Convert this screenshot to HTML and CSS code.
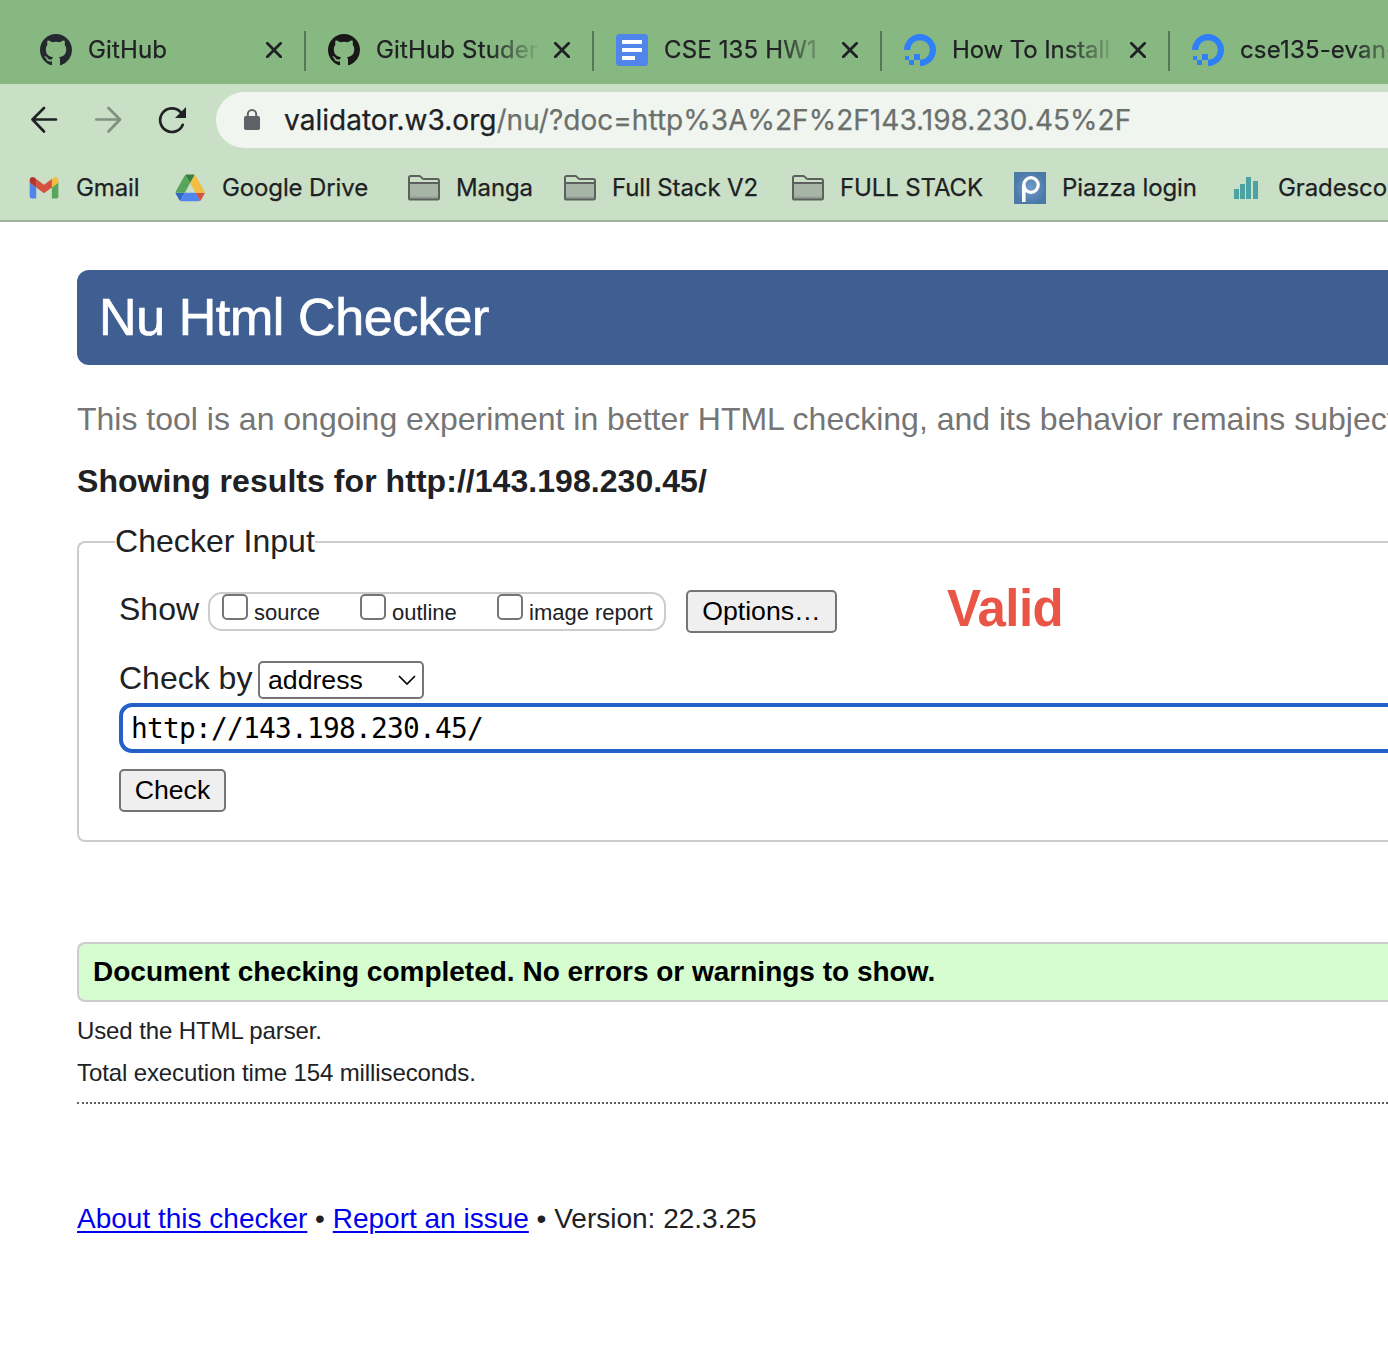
FILE: index.html
```html
<!DOCTYPE html>
<html lang="en">
<head>
<meta charset="utf-8">
<title>Nu Html Checker</title>
<link rel="stylesheet" href="styles.css">
</head>
<body>
<svg class="defs" width="0" height="0" aria-hidden="true">
  <symbol id="github" viewBox="0 0 16 16"><path d="M8 0C3.58 0 0 3.58 0 8c0 3.54 2.29 6.53 5.47 7.59.4.07.55-.17.55-.38 0-.19-.01-.82-.01-1.49-2.01.37-2.53-.49-2.69-.94-.09-.23-.48-.94-.82-1.13-.28-.15-.68-.52-.01-.53.63-.01 1.08.58 1.23.82.72 1.21 1.87.87 2.33.66.07-.52.28-.87.51-1.07-1.78-.2-3.64-.89-3.64-3.95 0-.87.31-1.59.82-2.15-.08-.2-.36-1.02.08-2.12 0 0 .67-.21 2.2.82.64-.18 1.32-.27 2-.27s1.36.09 2 .27c1.53-1.04 2.2-.82 2.2-.82.44 1.1.16 1.92.08 2.12.51.56.82 1.27.82 2.15 0 3.07-1.87 3.75-3.65 3.95.29.25.54.73.54 1.48 0 1.07-.01 1.93-.01 2.2 0 .21.15.46.55.38A8.01 8.01 0 0 0 16 8c0-4.42-3.58-8-8-8z"/></symbol>
  <symbol id="ocean" viewBox="0 0 32 32"><path fill="#2f80f7" d="M16 32v-6.2A9.8 9.8 0 1 0 6.2 16H0a16 16 0 1 1 16 16zM10 20h6v6h-6zM5 26h5v5H5zM1 22h4v4H1z"/></symbol>
  <symbol id="close" viewBox="0 0 16 16"><path d="M1.3 1.3l13.4 13.4M14.7 1.3L1.3 14.7" fill="none" stroke="#202124" stroke-width="2.8" stroke-linecap="round"/></symbol>
  <symbol id="folder" viewBox="0 0 32 26"><path d="M1 8h30v16H1z" fill="#a6b5a5"/><path d="M1 21.5h30V24H1z" fill="#93a092"/><path d="M1 23.2V2.8Q1 1 2.8 1h8.4q.8 0 1.4.6l2 2q.5.5 1.3.5h13.3q1.8 0 1.8 1.8v17.3q0 1.3-1.3 1.3H2.3Q1 24.500 1 23.200zM1 8h30" fill="none" stroke="#5c605f" stroke-width="2"/></symbol>
</svg>

<header class="browser">
  <div class="tabs">
    <div class="tab"><svg class="fav slate"><use href="#github"/></svg><span class="title">GitHub</span><svg class="x"><use href="#close"/></svg></div>
    <div class="tab"><svg class="fav ink"><use href="#github"/></svg><span class="title">GitHub Studen</span><svg class="x"><use href="#close"/></svg></div>
    <div class="tab"><svg class="fav" viewBox="0 0 32 32"><rect width="32" height="32" rx="3.500" fill="#5085ec"/><path fill="#fff" d="M6 6h20v4H6zM6 14h20v4H6zM6 22h13v4H6z"/></svg><span class="title">CSE 135 HW1</span><svg class="x"><use href="#close"/></svg></div>
    <div class="tab"><svg class="fav"><use href="#ocean"/></svg><span class="title tight">How To Install</span><svg class="x"><use href="#close"/></svg></div>
    <div class="tab"><svg class="fav"><use href="#ocean"/></svg><span class="title">cse135-evan-</span></div>
  </div>

  <div class="nav">
    <svg class="navicon" viewBox="0 0 32 32"><path d="M28 15.500H5M16 4L4.500 15.500 16 27.500" fill="none" stroke="#202124" stroke-width="2.700" stroke-linecap="round" stroke-linejoin="round"/></svg>
    <svg class="navicon" viewBox="0 0 32 32"><path d="M4.300 15.500H27M16.500 4L28 15.500 16.500 27.500" fill="none" stroke="#7f917f" stroke-width="2.700" stroke-linecap="round" stroke-linejoin="round"/></svg>
    <svg class="navicon" viewBox="0 0 32 32"><path d="M26.800 20.800A11.800 11.800 0 1 1 24.500 8" fill="none" stroke="#202124" stroke-width="2.700" stroke-linecap="round"/><path d="M30 3v11H19z" fill="#202124"/></svg>
    <div class="omnibox">
      <svg class="lock" viewBox="0 0 16 22"><rect y="7" width="16" height="14" rx="1.800" fill="#5f6368"/><path d="M3.800 8V5.300a4.200 4.200 0 0 1 8.400 0V8" fill="none" stroke="#5f6368" stroke-width="2"/></svg>
      <span class="url"><span class="host">validator.w3.org</span>/nu/?doc=http%3A%2F%2F143.198.230.45%2F</span>
    </div>
  </div>

  <div class="bookmarks">
    <div class="bm"><svg class="bmicon" viewBox="0 0 32 32"><g transform="translate(1.700 5) scale(.326)"><path fill="#5085ec" d="M6 66h14V32L0 17v43c0 3.320 2.690 6 6 6"/><path fill="#58a55c" d="M68 66h14c3.320 0 6-2.690 6-6V17L68 32"/><path fill="#f1bd42" d="M68 6v26l20-15V9c0-7.420-8.470-11.650-14.400-7.200"/><path fill="#d85140" d="M20 32V6l24 18L68 6v26L44 50"/><path fill="#b33629" d="M0 9v8l20 15V6l-5.600-4.200C8.470-2.650 0 1.580 0 9"/></g></svg><span>Gmail</span></div>
    <div class="bm"><svg class="bmicon" viewBox="0 0 32 32"><g transform="translate(1.600 2.500) scale(.333 .342)"><path d="m6.600 66.850 3.850 6.650c.8 1.400 1.950 2.500 3.300 3.300l13.750-23.800H0c0 1.550.4 3.100 1.200 4.500z" fill="#2f66ca"/><path d="m43.650 25-13.750-23.800c-1.350.8-2.500 1.900-3.300 3.300L1.200 48.500C.4 49.900 0 51.450 0 53h27.500z" fill="#58a55c"/><path d="m73.550 76.800c1.350-.8 2.500-1.900 3.300-3.300l1.600-2.750 7.650-13.250c.8-1.400 1.200-2.950 1.200-4.500H59.800l5.850 11.500z" fill="#d85140"/><path d="m43.650 25 13.750-23.800C56.050.4 54.500 0 52.900 0H34.400c-1.600 0-3.150.45-4.500 1.200z" fill="#387e40"/><path d="M59.800 53H27.500L13.750 76.800c1.350.8 2.900 1.200 4.500 1.200h50.800c1.600 0 3.150-.45 4.500-1.200z" fill="#5085ec"/><path d="m73.400 26.500-12.700-22c-.8-1.400-1.950-2.500-3.300-3.300L43.650 25l16.150 28h27.450c0-1.550-.4-3.100-1.200-4.500z" fill="#f1bd42"/></g></svg><span>Google Drive</span></div>
    <div class="bm"><svg class="folder"><use href="#folder"/></svg><span>Manga</span></div>
    <div class="bm"><svg class="folder"><use href="#folder"/></svg><span>Full Stack V2</span></div>
    <div class="bm"><svg class="folder"><use href="#folder"/></svg><span>FULL STACK</span></div>
    <div class="bm"><svg class="bmicon" viewBox="0 0 32 32"><defs><radialGradient id="pz"><stop offset="0" stop-color="#6f9bc8"/><stop offset="1" stop-color="#4c7aa8"/></radialGradient></defs><path fill="url(#pz)" d="M0 0h32v32H0z"/><path d="M9.800 30V13" fill="none" stroke="#fff" stroke-width="3.600"/><ellipse cx="17" cy="13" rx="7.200" ry="7.300" fill="none" stroke="#fff" stroke-width="3.200"/></svg><span>Piazza login</span></div>
    <div class="bm"><svg class="bmicon" viewBox="0 0 32 32"><path fill="#4ba3a2" d="M4 17h5v10H4zM10 12h5v15h-5zM16 5h5v22h-5zM23 9h5v18h-5z"/></svg><span>Gradesco</span></div>
  </div>
</header>

<main class="page">
  <h1 class="banner">Nu Html Checker</h1>
  <p class="intro">This tool is an ongoing experiment in better HTML checking, and its behavior remains subject</p>
  <h2 class="results">Showing results for http://143.198.230.45/</h2>

  <fieldset class="checker">
    <legend>Checker Input</legend>
    <div class="row show">
      <span class="label">Show</span>
      <div class="checks">
        <label class="check"><i class="box"></i><span>source</span></label>
        <label class="check"><i class="box"></i><span>outline</span></label>
        <label class="check"><i class="box"></i><span>image report</span></label>
      </div>
      <button class="btn options">Options…</button>
      <strong class="valid">Valid</strong>
    </div>
    <div class="row by">
      <span class="label">Check by</span>
      <div class="select"><span>address</span><svg class="chev" viewBox="0 0 18 10"><path d="M1 1l8 8 8-8" fill="none" stroke="#000" stroke-width="1.700"/></svg></div>
    </div>
    <div class="address">http://143.198.230.45/</div>
    <button class="btn submit">Check</button>
  </fieldset>

  <p class="success">Document checking completed. No errors or warnings to show.</p>
  <p class="detail">Used the HTML parser.</p>
  <p class="detail">Total execution time 154 milliseconds.</p>
  <footer class="footer"><a href="#">About this checker</a> • <a href="#">Report an issue</a> • <span>Version: 22.3.25</span></footer>
</main>
</body>
</html>
```
FILE: styles.css
```css
* { box-sizing: border-box; }
body {
  margin: 0;
  width: 1388px;
  height: 1356px;
  overflow: hidden;
  background: #fff;
  color: #202124;
  font-family: "Liberation Sans", Arial, sans-serif;
}
.defs { display: block; }
h1, h2, p { margin: 0; white-space: nowrap; }

/* Browser chrome */
.browser {
  height: 222px;
  background: #cae0c6;
  border-bottom: 2px solid #a4b1a2;
  font-family: Inter, sans-serif;
  -webkit-text-stroke-width: .25px;
}
.tabs {
  display: flex;
  height: 84px;
  padding: 16px 0 0 16px;
  background: #88b882;
  overflow: hidden;
}
.tab {
  display: flex;
  flex: none;
  align-items: center;
  width: 290px;
  height: 68px;
  padding-left: 24px;
  margin-right: -2px;
  background: linear-gradient(#557753, #557753) right 15px / 2px 40px no-repeat;
}
.tab:last-child { background: none; width: 220px; margin-right: 0; }
.fav { flex: none; width: 32px; height: 32px; }
.slate { fill: #24292f; }
.ink { fill: #191717; }
.title {
  width: 162px;
  margin: 0 16px;
  overflow: hidden;
  white-space: nowrap;
  font-size: 24px;
  line-height: 32px;
  letter-spacing: .15px;
  -webkit-mask-image: linear-gradient(90deg, #000 112px, transparent 166px);
  mask-image: linear-gradient(90deg, #000 112px, transparent 166px);
}
.tight { letter-spacing: -.1px; }
.tab:last-child .title { flex: none; margin-right: 0; }
.x { flex: none; width: 16px; height: 16px; }
.nav {
  display: flex;
  align-items: center;
  gap: 32px;
  height: 72px;
  padding-left: 28px;
}
.navicon { flex: none; width: 32px; height: 32px; }
.omnibox {
  display: flex;
  flex: 1;
  align-items: center;
  gap: 24px;
  height: 56px;
  margin-left: -4px;
  padding-left: 28px;
  border-radius: 28px 0 0 28px;
  background: #f0f6ef;
}
.lock { width: 16px; height: 22px; }
.url { font-size: 28px; color: #6b706d; letter-spacing: .03px; white-space: nowrap; }
.host { color: #202124; }
.bookmarks {
  display: grid;
  grid-template-columns: 146px 234px 156px 228px 222px 216px 158px;
  align-items: center;
  height: 64px;
  padding-left: 28px;
  overflow: hidden;
}
.bm { display: flex; align-items: center; gap: 16px; font-size: 24px; line-height: 32px; letter-spacing: -.12px; white-space: nowrap; }
.bmicon { flex: none; width: 32px; height: 32px; }
.folder { flex: none; width: 32px; height: 26px; }

/* Checker page */
.page { width: 1388px; padding: 48px 0 0 77px; overflow: hidden; }
.banner {
  height: 95px;
  padding-left: 22px;
  border-radius: 12px 0 0 12px;
  background: #3f5e92;
  color: #fff;
  font-size: 52px;
  font-weight: 400;
  line-height: 94px;
  letter-spacing: -.4px;
  -webkit-text-stroke: .7px #fff;
}
.intro { margin-top: 33px; font-size: 32px; line-height: 42px; color: #757575; overflow: hidden; }
.results { margin-top: 20px; font-size: 32px; line-height: 42px; letter-spacing: .05px; }
.checker {
  display: block;
  height: 320px;
  margin: 20px 0 0;
  padding: 0 0 0 40px;
  border: 2px solid #ccc;
  border-right: 0;
  border-radius: 8px 0 0 8px;
}
.checker legend { margin-left: -4px; padding: 0 0 2px; font-size: 32px; line-height: 38px; letter-spacing: .05px; }
.row { display: flex; }
.label { font-size: 32px; line-height: 40px; }
.show { height: 60px; margin-top: 27px; }
.show .label { width: 89px; }
.checks {
  display: flex;
  width: 458px;
  height: 39px;
  margin-top: 3px;
  padding-left: 12px;
  border: 2px solid #ccc;
  border-radius: 14px;
}
.check { display: flex; gap: 6px; font-size: 22px; line-height: 37px; white-space: nowrap; }
.check:nth-child(1) { width: 138px; }
.check:nth-child(2) { width: 137px; }
.box { width: 26px; height: 26px; border: 2px solid #757575; border-radius: 5px; background: #fff; }
.btn {
  height: 43px;
  padding: 0 0 2px;
  border: 2px solid #757575;
  border-radius: 5px;
  background: #efefef;
  color: #000;
  font: 26.667px/36px "Liberation Sans", Arial, sans-serif;
}
.options { width: 151px; margin: 1px 0 0 20px; }
.valid { margin-left: 110px; font-size: 51px; line-height: 39px; letter-spacing: -.6px; color: #eb5545; }
.by { height: 54px; margin-top: 9px; }
.by .label { width: 139px; }
.select {
  display: flex;
  align-items: center;
  justify-content: space-between;
  width: 166px;
  height: 38px;
  margin-top: 3px;
  padding: 0 6px 0 8px;
  border: 2px solid #757575;
  border-radius: 5px;
  font-size: 26.667px;
  line-height: 34px;
  color: #000;
}
.chev { width: 18px; height: 10px; }
.address {
  height: 50px;
  margin-top: -9px;
  padding-left: 8px;
  border: 4px solid #2460c8;
  border-right: 0;
  border-radius: 13px 0 0 13px;
  color: #000;
  font: 27.800px/43px "DejaVu Sans Mono", monospace;
  letter-spacing: -.74px;
}
.submit { display: block; width: 107px; margin-top: 16px; }
.success {
  height: 60px;
  margin-top: 100px;
  padding-left: 14px;
  border: 2px solid #ccc;
  border-right: 0;
  border-radius: 8px 0 0 8px;
  background: #d5fdd0;
  color: #000;
  font-size: 28px;
  font-weight: 700;
  line-height: 55px;
}
.detail { margin-top: 8px; font-size: 24px; line-height: 42px; letter-spacing: -.11px; }
.detail + .detail { margin-top: 0; height: 52px; border-bottom: 2px dotted #5c5e61; }
.footer { margin-top: 95px; font-size: 28px; line-height: 40px; }
.footer a { color: #0000ee; text-underline-offset: 3px; text-decoration-thickness: 2px; }
```
